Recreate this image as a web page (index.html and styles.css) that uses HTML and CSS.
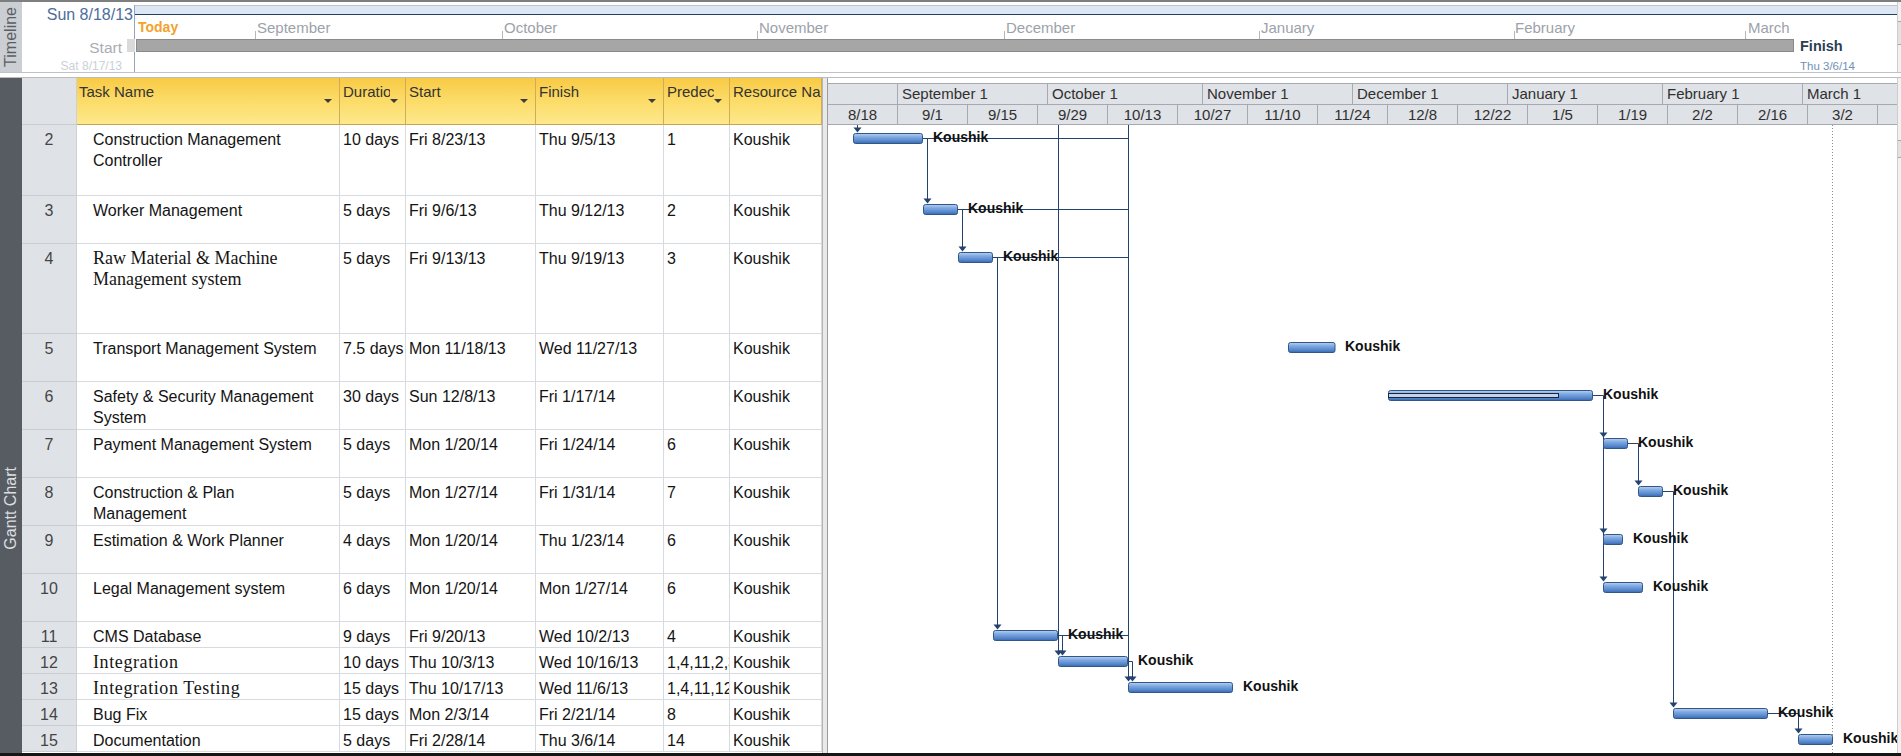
FILE: index.html
```html
<!DOCTYPE html>
<html lang="en">
<head>
<meta charset="utf-8">
<title>Gantt Chart</title>
<link rel="stylesheet" href="styles.css">
</head>
<body>
<div class="app">
  <section class="timeline">
    <div class="vlabel tl-label"><span>Timeline</span></div>
    <div class="tl-canvas">
      <div class="tl-band"></div>
      <div class="tl-vline"></div>
      <div class="tl-sun">Sun 8/18/13</div>
      <div class="tl-today">Today</div>
      <div class="tl-month m-sep">September</div>
      <div class="tl-month m-oct">October</div>
      <div class="tl-month m-nov">November</div>
      <div class="tl-month m-dec">December</div>
      <div class="tl-month m-jan">January</div>
      <div class="tl-month m-feb">February</div>
      <div class="tl-month m-mar">March</div>
      <i class="tl-tick k-sep"></i><i class="tl-tick k-oct"></i><i class="tl-tick k-nov"></i><i class="tl-tick k-dec"></i><i class="tl-tick k-jan"></i><i class="tl-tick k-feb"></i><i class="tl-tick k-mar"></i>
      <div class="tl-startmark"></div>
      <div class="tl-bar"></div>
      <div class="tl-start">Start</div>
      <div class="tl-sat">Sat 8/17/13</div>
      <div class="tl-finish">Finish</div>
      <div class="tl-thu">Thu 3/6/14</div>
    </div>
    <div class="stub"><i class="thumb t1"></i></div>
  </section>
  <div class="gap"></div>
  <section class="gantt">
    <div class="vlabel gc-label"><span>Gantt Chart</span></div>
    <div class="grid">
      <div class="row head">
        <div class="c num"></div>
        <div class="c h name-h"><span class="ht">Task Name</span><i class="dd"></i></div>
        <div class="c h"><span class="ht">Duration</span><i class="dd"></i></div>
        <div class="c h"><span class="ht">Start</span><i class="dd"></i></div>
        <div class="c h"><span class="ht">Finish</span><i class="dd"></i></div>
        <div class="c h"><span class="ht">Predecessors</span><i class="dd"></i></div>
        <div class="c h res"><span class="ht">Resource Names</span></div>
      </div>
      <div class="row h71">
        <div class="c num">2</div>
        <div class="c name">Construction Management<br>Controller</div>
        <div class="c">10 days</div><div class="c">Fri 8/23/13</div><div class="c">Thu 9/5/13</div><div class="c">1</div><div class="c">Koushik</div>
      </div>
      <div class="row h48">
        <div class="c num">3</div>
        <div class="c name">Worker Management</div>
        <div class="c">5 days</div><div class="c">Fri 9/6/13</div><div class="c">Thu 9/12/13</div><div class="c">2</div><div class="c">Koushik</div>
      </div>
      <div class="row h90">
        <div class="c num">4</div>
        <div class="c name serif">Raw Material &amp; Machine<br>Management system</div>
        <div class="c">5 days</div><div class="c">Fri 9/13/13</div><div class="c">Thu 9/19/13</div><div class="c">3</div><div class="c">Koushik</div>
      </div>
      <div class="row h48">
        <div class="c num">5</div>
        <div class="c name">Transport Management System</div>
        <div class="c">7.5 days</div><div class="c">Mon 11/18/13</div><div class="c">Wed 11/27/13</div><div class="c"></div><div class="c">Koushik</div>
      </div>
      <div class="row h48">
        <div class="c num">6</div>
        <div class="c name">Safety &amp; Security Management<br>System</div>
        <div class="c">30 days</div><div class="c">Sun 12/8/13</div><div class="c">Fri 1/17/14</div><div class="c"></div><div class="c">Koushik</div>
      </div>
      <div class="row h48">
        <div class="c num">7</div>
        <div class="c name">Payment Management System</div>
        <div class="c">5 days</div><div class="c">Mon 1/20/14</div><div class="c">Fri 1/24/14</div><div class="c">6</div><div class="c">Koushik</div>
      </div>
      <div class="row h48">
        <div class="c num">8</div>
        <div class="c name">Construction &amp; Plan<br>Management</div>
        <div class="c">5 days</div><div class="c">Mon 1/27/14</div><div class="c">Fri 1/31/14</div><div class="c">7</div><div class="c">Koushik</div>
      </div>
      <div class="row h48">
        <div class="c num">9</div>
        <div class="c name">Estimation &amp; Work Planner</div>
        <div class="c">4 days</div><div class="c">Mon 1/20/14</div><div class="c">Thu 1/23/14</div><div class="c">6</div><div class="c">Koushik</div>
      </div>
      <div class="row h48">
        <div class="c num">10</div>
        <div class="c name">Legal Management system</div>
        <div class="c">6 days</div><div class="c">Mon 1/20/14</div><div class="c">Mon 1/27/14</div><div class="c">6</div><div class="c">Koushik</div>
      </div>
      <div class="row h26">
        <div class="c num">11</div>
        <div class="c name">CMS Database</div>
        <div class="c">9 days</div><div class="c">Fri 9/20/13</div><div class="c">Wed 10/2/13</div><div class="c">4</div><div class="c">Koushik</div>
      </div>
      <div class="row h26">
        <div class="c num">12</div>
        <div class="c name serif wide">Integration</div>
        <div class="c">10 days</div><div class="c">Thu 10/3/13</div><div class="c">Wed 10/16/13</div><div class="c">1,4,11,2,3</div><div class="c">Koushik</div>
      </div>
      <div class="row h26">
        <div class="c num">13</div>
        <div class="c name serif wide">Integration Testing</div>
        <div class="c">15 days</div><div class="c">Thu 10/17/13</div><div class="c">Wed 11/6/13</div><div class="c">1,4,11,12,2,3</div><div class="c">Koushik</div>
      </div>
      <div class="row h26">
        <div class="c num">14</div>
        <div class="c name">Bug Fix</div>
        <div class="c">15 days</div><div class="c">Mon 2/3/14</div><div class="c">Fri 2/21/14</div><div class="c">8</div><div class="c">Koushik</div>
      </div>
      <div class="row h26">
        <div class="c num">15</div>
        <div class="c name">Documentation</div>
        <div class="c">5 days</div><div class="c">Fri 2/28/14</div><div class="c">Thu 3/6/14</div><div class="c">14</div><div class="c">Koushik</div>
      </div>
    </div>
    <div class="splitter"></div>
    <div class="chart">
      <div class="tscale">
        <div class="tier top">
          <div class="tc w70"></div>
          <div class="tc w150">September 1</div>
          <div class="tc w155">October 1</div>
          <div class="tc w150">November 1</div>
          <div class="tc w155">December 1</div>
          <div class="tc w155">January 1</div>
          <div class="tc w140">February 1</div>
          <div class="tc w150">March 1</div>
        </div>
        <div class="tier bottom">
          <div class="tc w70">8/18</div><div class="tc w70">9/1</div><div class="tc w70">9/15</div><div class="tc w70">9/29</div>
          <div class="tc w70">10/13</div><div class="tc w70">10/27</div><div class="tc w70">11/10</div><div class="tc w70">11/24</div>
          <div class="tc w70">12/8</div><div class="tc w70">12/22</div><div class="tc w70">1/5</div><div class="tc w70">1/19</div>
          <div class="tc w70">2/2</div><div class="tc w70">2/16</div><div class="tc w70">3/2</div><div class="tc w70">3/16</div>
        </div>
      </div>
      <div class="chart-body">
        <svg class="bars" width="1069" height="628" viewBox="0 0 1069 628">
          <defs>
            <linearGradient id="barfill" x1="0" y1="0" x2="0" y2="1">
              <stop offset="0" stop-color="#b9d0f0"/>
              <stop offset="0.35" stop-color="#80a9e0"/>
              <stop offset="0.7" stop-color="#5a8bd0"/>
              <stop offset="1" stop-color="#3a69ad"/>
            </linearGradient>
          </defs>
          <line class="status" x1="1004.5" y1="0" x2="1004.5" y2="628"/>
          <g class="links">
            <path d="M29.5 0 V4"/>
            <path d="M95 13.5 H300.5"/>
            <path d="M99.5 13.5 V74"/>
            <path d="M130 84.5 H300.5"/>
            <path d="M134.5 84.5 V122"/>
            <path d="M165 132.5 H300.5"/>
            <path d="M169.5 132.5 V500"/>
            <path d="M230 510.5 H300.5"/>
            <path d="M234.5 510.5 V526"/>
            <path d="M230.5 0 V526"/>
            <path d="M300.5 0 V552"/>
            <path d="M300 536.5 H304.5 V552"/>
            <path d="M765 270.5 H775.5 V452"/>
            <path d="M800 318.5 H810.5 V356"/>
            <path d="M835 366.5 H845.5 V578"/>
            <path d="M940 588.5 H970.5 V604"/>
          </g>
          <g class="heads">
            <polygon points="25.5,2.5 33.5,2.5 29.5,7.5"/>
            <polygon points="95.5,73.5 103.5,73.5 99.5,78.5"/>
            <polygon points="130.5,121.5 138.5,121.5 134.5,126.5"/>
            <polygon points="165.5,499.5 173.5,499.5 169.5,504.5"/>
            <polygon points="226.5,525.5 234.5,525.5 230.5,530.5"/>
            <polygon points="230.5,525.5 238.5,525.5 234.5,530.5"/>
            <polygon points="296.5,551.5 304.5,551.5 300.5,556.5"/>
            <polygon points="300.5,551.5 308.5,551.5 304.5,556.5"/>
            <polygon points="771.5,307.5 779.5,307.5 775.5,312.5"/>
            <polygon points="771.5,403.5 779.5,403.5 775.5,408.5"/>
            <polygon points="771.5,451.5 779.5,451.5 775.5,456.5"/>
            <polygon points="806.5,355.5 814.5,355.5 810.5,360.5"/>
            <polygon points="841.5,577.5 849.5,577.5 845.5,582.5"/>
            <polygon points="966.5,603.5 974.5,603.5 970.5,608.5"/>
          </g>
          <g class="taskbars">
            <rect x="25.5" y="8.5" width="69" height="10" rx="2"/>
            <rect x="95.5" y="79.5" width="34" height="10" rx="2"/>
            <rect x="130.5" y="127.5" width="34" height="10" rx="2"/>
            <rect x="460.5" y="217.5" width="46.5" height="10" rx="2"/>
            <rect x="560.5" y="265.5" width="204" height="10" rx="2"/>
            <rect x="775.5" y="313.5" width="24" height="10" rx="2"/>
            <rect x="810.5" y="361.5" width="24" height="10" rx="2"/>
            <rect x="775.5" y="409.5" width="19" height="10" rx="2"/>
            <rect x="775.5" y="457.5" width="39" height="10" rx="2"/>
            <rect x="165.5" y="505.5" width="64" height="10" rx="2"/>
            <rect x="230.5" y="531.5" width="69" height="10" rx="2"/>
            <rect x="300.5" y="557.5" width="104" height="10" rx="2"/>
            <rect x="845.5" y="583.5" width="94" height="10" rx="2"/>
            <rect x="970.5" y="609.5" width="34" height="10" rx="2"/>
          </g>
          <rect class="progress" x="560.5" y="268.5" width="170" height="4"/>
          <g class="labels">
            <text x="105" y="17">Koushik</text>
            <text x="140" y="88">Koushik</text>
            <text x="175" y="136">Koushik</text>
            <text x="517" y="226">Koushik</text>
            <text x="775" y="274">Koushik</text>
            <text x="810" y="322">Koushik</text>
            <text x="845" y="370">Koushik</text>
            <text x="805" y="418">Koushik</text>
            <text x="825" y="466">Koushik</text>
            <text x="240" y="514">Koushik</text>
            <text x="310" y="540">Koushik</text>
            <text x="415" y="566">Koushik</text>
            <text x="950" y="592">Koushik</text>
            <text x="1015" y="618">Koushik</text>
          </g>
        </svg>
      </div>
    </div>
    <div class="stub"><i class="thumb t2"></i></div>
  </section>
  <div class="bottom-line"></div>
</div>
</body>
</html>
```

FILE: styles.css
```css
* { box-sizing: border-box; }
html, body { margin: 0; padding: 0; }
body {
  width: 1901px;
  height: 756px;
  overflow: hidden;
  background: #fff;
  font-family: "Liberation Sans", Arial, sans-serif;
}
.app {
  width: 1901px;
  height: 756px;
  border-top: 2px solid #7f7f7f;
  display: flex;
  flex-direction: column;
}

/* ---------- vertical view labels ---------- */
.vlabel {
  width: 22px;
  flex: none;
  display: flex;
  flex-direction: column;
  align-items: center;
}
.vlabel span {
  writing-mode: vertical-rl;
  transform: rotate(180deg);
  font-size: 16px;
  line-height: 22px;
  white-space: nowrap;
}
.tl-label { background: #cbced2; justify-content: center; color: #5a5e63; }
.gc-label { background: #575c63; color: #dcdee0; }
.gc-label span { margin-top: 389px; }

/* ---------- timeline ---------- */
.timeline {
  height: 71px;
  flex: none;
  display: flex;
  border-bottom: 1px solid #bfc3c8;
}
.tl-canvas { position: relative; flex: 1; }
.tl-band {
  position: absolute; left: 112px; right: 0; top: 3px; height: 10px;
  background: #dde7f3;
  border-top: 1px solid #b9c5d3;
  border-bottom: 1px solid #213f63;
}
.tl-vline { position: absolute; left: 112px; top: 3px; width: 1px; height: 67px; background: #95a6ba; }
.tl-sun {
  position: absolute; left: 0; width: 111px; top: 4px;
  text-align: right; font-size: 16px; line-height: 18px; color: #4d6d9a; white-space: nowrap;
}
.tl-today {
  position: absolute; left: 116px; top: 17px;
  font-size: 14px; line-height: 16px; font-weight: bold; color: #f2a22e;
}
.tl-month {
  position: absolute; top: 17px;
  font-size: 15px; line-height: 17px; color: #9ca2aa; white-space: nowrap;
}
.m-sep { left: 235px; } .m-oct { left: 482px; } .m-nov { left: 737px; } .m-dec { left: 984px; }
.m-jan { left: 1239px; } .m-feb { left: 1493px; } .m-mar { left: 1726px; }
.tl-tick { position: absolute; top: 29px; width: 1px; height: 8px; background: #b3b8bf; }
.k-sep { left: 233px; } .k-oct { left: 480px; } .k-nov { left: 735px; } .k-dec { left: 982px; }
.k-jan { left: 1237px; } .k-feb { left: 1492px; } .k-mar { left: 1723px; }
.tl-bar {
  position: absolute; left: 114px; width: 1658px; top: 37px; height: 13px;
  background: #a6a6a6; border: 1px solid #8a8a8a;
}
.tl-startmark { position: absolute; left: 105px; width: 8px; top: 37px; height: 13px; background: #dadada; }
.tl-start {
  position: absolute; left: 0; width: 100px; top: 37px;
  text-align: right; font-size: 15.5px; line-height: 18px; color: #a9adb3;
}
.tl-sat {
  position: absolute; left: 0; width: 100px; top: 58px;
  text-align: right; font-size: 12px; line-height: 12px; color: #c8d0d9; white-space: nowrap;
}
.tl-finish {
  position: absolute; left: 1778px; top: 36px;
  font-size: 14.5px; line-height: 17px; font-weight: bold; color: #2c3e52;
}
.tl-thu {
  position: absolute; left: 1778px; top: 58px;
  font-size: 11.5px; line-height: 12px; color: #7290b6; white-space: nowrap;
}

.stub {
  width: 4px; flex: none; position: relative;
  background: #f1f1f1; border-left: 1px solid #cdcdcd;
}
.thumb { position: absolute; left: 0; right: 0; background: #e2e2e2; border-top: 1px solid #a8a8a8; border-bottom: 1px solid #a8a8a8; }
.thumb.t1 { top: 19px; height: 24px; }
.thumb.t2 { top: 62px; height: 18px; }

.gap { height: 4px; flex: none; }

/* ---------- gantt ---------- */
.gantt {
  height: 676px;
  flex: none;
  display: flex;
  border-top: 1px solid #bcbcbc;
}
.grid { width: 800px; flex: none; display: flex; flex-direction: column; }
.row {
  display: grid;
  grid-template-columns: 55px 263px 66px 130px 128px 66px 92px;
  flex: none;
}
.head { height: 47px; }
.h71 { height: 71px; }
.h48 { height: 48px; }
.h90 { height: 90px; }
.h26 { height: 26px; }
.c {
  border-right: 1px solid #d7dadf;
  border-bottom: 1px solid #d7dadf;
  padding: 4px 0 0 3px;
  font-size: 16px;
  line-height: 21px;
  color: #141414;
  white-space: nowrap;
  overflow: hidden;
}
.c.num {
  background: #dfe3e8;
  text-align: center;
  padding-left: 0;
  color: #454545;
  border-right-color: #cdd1d6;
  border-bottom-color: #c9cdd2;
}
.c.name { padding-left: 16px; }
.serif { font-family: "Liberation Serif", "Times New Roman", serif; font-size: 18px; }
.wide { letter-spacing: 0.6px; }

.head .c.h {
  position: relative;
  background: linear-gradient(#f8ca45, #fcdc68 50%, #fee88c);
  border-right-color: #d1ab57;
  border-bottom-color: #c8a24f;
  font-size: 15px;
  line-height: 20px;
  color: #333;
  padding: 4px 15px 0 3px;
}
.head .c.name-h { padding-left: 2px; }
.head .c.res { padding-right: 0; }
.ht { display: block; overflow: hidden; white-space: nowrap; }
.dd {
  position: absolute; right: 7px; top: 21px;
  width: 0; height: 0;
  border-left: 4px solid transparent;
  border-right: 4px solid transparent;
  border-top: 4px solid #3c3c3c;
}

.splitter {
  width: 6px; flex: none;
  background: #e9e9e9;
  border-left: 1px solid #b5b5b5;
  border-right: 1px solid #9c9c9c;
}

.chart { flex: 1; min-width: 0; overflow: hidden; display: flex; flex-direction: column; }
.tscale { padding-top: 5px; flex: none; }
.tier { display: flex; overflow: hidden; background: #dfe2e6; border-top: 1px solid #a6aab0; }
.tier.top { height: 21px; }
.tier.bottom { height: 21px; border-bottom: 1px solid #a6aab0; }
.tc {
  flex: none;
  border-right: 1px solid #a6aab0;
  font-size: 15px;
  color: #303030;
  white-space: nowrap;
  overflow: hidden;
}
.tier.top .tc { line-height: 20px; padding-left: 4px; }
.tier.bottom .tc { line-height: 19px; text-align: center; }
.w70 { width: 70px; } .w140 { width: 140px; } .w150 { width: 150px; } .w155 { width: 155px; }

.chart-body { flex: 1; position: relative; }
.bars { display: block; }
.status { stroke: #8f8f8f; stroke-width: 1; stroke-dasharray: 1 2; }
.links path { stroke: #23426e; stroke-width: 1; fill: none; }
.heads polygon { fill: #23426e; }
.taskbars rect { fill: url(#barfill); stroke: #2f5889; stroke-width: 1; }
.progress { fill: #c3d3ea; stroke: #17263f; stroke-width: 1; }
.labels text {
  font-family: "Liberation Sans", Arial, sans-serif;
  font-size: 14px;
  font-weight: bold;
  fill: #111;
}

.bottom-line { height: 3px; flex: none; background: #161616; }
```
